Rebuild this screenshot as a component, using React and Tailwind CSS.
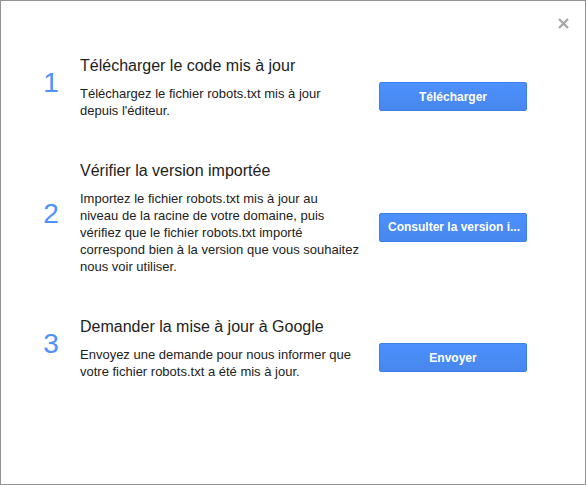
const steps = [
  {
    n: '1',
    title: 'Télécharger le code mis à jour',
    lines: ['Téléchargez le fichier robots.txt mis à jour', "depuis l'éditeur."],
    button: 'Télécharger',
  },
  {
    n: '2',
    title: 'Vérifier la version importée',
    lines: [
      'Importez le fichier robots.txt mis à jour au',
      'niveau de la racine de votre domaine, puis',
      'vérifiez que le fichier robots.txt importé',
      'correspond bien à la version que vous souhaitez',
      'nous voir utiliser.',
    ],
    button: 'Consulter la version i...',
  },
  {
    n: '3',
    title: 'Demander la mise à jour à Google',
    lines: ['Envoyez une demande pour nous informer que', 'votre fichier robots.txt a été mis à jour.'],
    button: 'Envoyer',
  },
]

const Step = ({ step }) => (
  <div className="flex items-center">
    <div className="w-[30px] text-center text-[28px] leading-[32px] text-[#4d90fe] -mt-[9px]">
      {step.n}
    </div>
    <div className="ml-[14px] w-[285px]">
      <h2 className="text-[16px] leading-[20px] text-[#222] mb-[9px]">{step.title}</h2>
      <p className="text-[13px] leading-[17px] text-[#222]">
        {step.lines.map((l, i) => (
          <span key={i} className="block whitespace-nowrap">{l}</span>
        ))}
      </p>
    </div>
    <button className="ml-[14px] mt-[18px] w-[148px] h-[29px] rounded-[2px] border border-[#3b7fee] bg-gradient-to-b from-[#4d90fe] to-[#4787ed] text-white text-[12px] font-bold whitespace-nowrap overflow-hidden px-2">
      {step.button}
    </button>
  </div>
)

export default function App() {
  return (
    <div
      className="relative w-[586px] h-[485px] bg-white border border-[#929292] overflow-hidden"
      style={{ fontFamily: '"Liberation Sans", Arial, sans-serif' }}
    >
      <button className="absolute left-[556px] top-[16px] w-[13px] h-[13px] flex items-center justify-center">
        <svg width="11" height="11" viewBox="0 0 11 11">
          <path d="M1 1 L10 10 M10 1 L1 10" stroke="#a6a6a6" strokeWidth="2.2" />
        </svg>
      </button>
      <div className="pl-[35px] pt-[55px] flex flex-col gap-[42px]">
        {steps.map((s) => (
          <Step key={s.n} step={s} />
        ))}
      </div>
    </div>
  )
}
